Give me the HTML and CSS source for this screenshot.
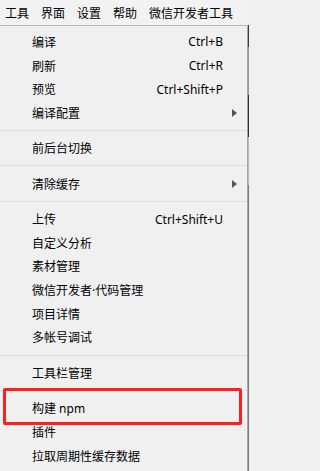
FILE: index.html
```html
<!DOCTYPE html>
<html lang="zh-CN">
<head>
<meta charset="utf-8">
<title>工具菜单</title>
<link rel="stylesheet" href="styles.css">
</head>
<body>
<div class="screen">
  <nav class="menubar">
    <span class="mb-item">工具</span>
    <span class="mb-item">界面</span>
    <span class="mb-item">设置</span>
    <span class="mb-item">帮助</span>
    <span class="mb-item">微信开发者工具</span>
  </nav>
  <div class="popup-wrap">
    <ul class="popup">
      <li class="item"><span class="label">编译</span><span class="key">Ctrl+B</span></li>
      <li class="item"><span class="label">刷新</span><span class="key">Ctrl+R</span></li>
      <li class="item"><span class="label">预览</span><span class="key">Ctrl+Shift+P</span></li>
      <li class="item sub"><span class="label">编译配置</span><span class="arrow"></span></li>
      <li class="sep"></li>
      <li class="item"><span class="label">前后台切换</span></li>
      <li class="sep"></li>
      <li class="item sub"><span class="label">清除缓存</span><span class="arrow"></span></li>
      <li class="sep"></li>
      <li class="item"><span class="label">上传</span><span class="key">Ctrl+Shift+U</span></li>
      <li class="item"><span class="label">自定义分析</span></li>
      <li class="item"><span class="label">素材管理</span></li>
      <li class="item"><span class="label">微信开发者·代码管理</span></li>
      <li class="item"><span class="label">项目详情</span></li>
      <li class="item"><span class="label">多帐号调试</span></li>
      <li class="sep"></li>
      <li class="item"><span class="label">工具栏管理</span></li>
      <li class="sep"></li>
      <li class="item"><span class="label">构建 npm</span></li>
      <li class="item"><span class="label">插件</span></li>
      <li class="item"><span class="label">拉取周期性缓存数据</span></li>
    </ul>
    <div class="edge"></div>
  </div>
  <div class="highlight"></div>
</div>
</body>
</html>
```

FILE: styles.css
```css
* { box-sizing: border-box; }
html, body {
  margin: 0;
  padding: 0;
  background: #f0f0f0;
}
body {
  font-family: "Noto Sans", "Noto Sans CJK SC", sans-serif;
  font-size: 12px;
  color: #000;
}
.screen {
  position: relative;
  width: 249px;
  height: 471px;
  overflow: hidden;
  background: #f0f0f0;
}
.menubar {
  display: flex;
  height: 25px;
  margin-left: -1px;
  align-items: center;
  padding-top: 2px;
  background: #f2f2f2;
}
.mb-item {
  padding: 0 6px;
  line-height: 16px;
  white-space: nowrap;
}
.popup-wrap {
  display: flex;
  height: 446px;
}
.popup {
  list-style: none;
  margin: 0;
  padding: 4px 0 0 0;
  width: 248px;
  border-top: 1px solid #b9b9b9;
  border-right: 1px solid #a8a8a8;
  background: #f0f0f0;
}
.edge {
  width: 1px;
  background: linear-gradient(#3a3a3a 0, #3a3a3a 22px, #9a9a9a 22px, #9a9a9a 70px, #2e2e2e 70px, #2e2e2e 112px, #bdbdbd 112px, #bdbdbd 160px, #7a7a7a 160px, #7a7a7a 446px);
}
.item {
  display: flex;
  align-items: center;
  height: 23.7px;
  padding: 0 24px 0 32px;
  white-space: nowrap;
}
.label { flex: 1; }
.key { text-align: right; }
.sub { padding-right: 10px; }
.arrow {
  width: 0;
  height: 0;
  border-top: 4px solid transparent;
  border-bottom: 4px solid transparent;
  border-left: 5px solid #555;
}
.sep {
  height: 11.7px;
  display: flex;
  align-items: center;
}
.sep::after {
  content: "";
  display: block;
  width: 100%;
  height: 1px;
  background: #dedede;
}
.highlight {
  position: absolute;
  left: 3px;
  top: 388px;
  width: 239px;
  height: 37px;
  border: 3px solid #ff1e1e;
  border-radius: 2px;
}
```
